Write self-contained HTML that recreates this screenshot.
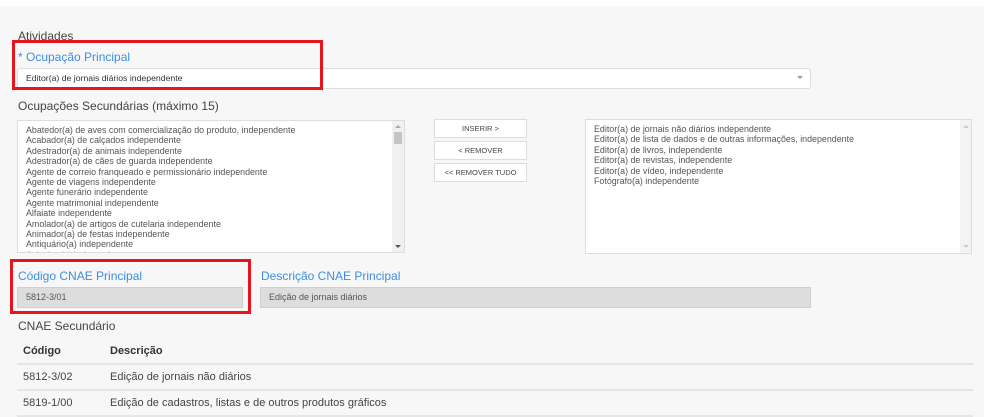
<!DOCTYPE html>
<html><head><meta charset="utf-8"><style>
*{box-sizing:border-box;margin:0;padding:0}
body{width:984px;height:417px;overflow:hidden;background:#f7f7f7;font-family:"Liberation Sans",Arial,sans-serif;color:#333;position:relative}
.a{position:absolute}
.lbl{font-size:12px;color:#444;white-space:nowrap}
.blue{color:#3a8ee6;font-size:12px;white-space:nowrap}
.box{background:#fff;border:1px solid #ddd}
.list{font-size:8.9px;line-height:10.4px;color:#555;padding:4px 0 0 8px;overflow:hidden;white-space:nowrap}
.btn{background:#fff;border:1px solid #ddd;font-size:7.5px;color:#444;text-align:center;line-height:17px;width:93px;height:19px;left:434px}
.red{border:3px solid #e8141b}
.gray{background:#ddd;border:1px solid #d0d0d0;font-size:9px;color:#555;padding-left:8px;line-height:19px}
.td{font-size:11px;color:#444;white-space:nowrap}
.hr{left:17px;width:956px;height:2px;background:#e6e6e6}
</style></head><body>
<div class="a" style="left:0;top:0;width:984px;height:6px;background:#fff"></div>
<div class="a lbl" style="left:18px;top:29px">Atividades</div>
<div class="a box" style="left:17px;top:68px;width:794px;height:21px;border-radius:3px;font-size:8.7px;color:#333;padding-left:8px;line-height:19px">Editor(a) de jornais diários independente</div>
<div class="a" style="left:797px;top:76px;width:0;height:0;border-left:3px solid transparent;border-right:3px solid transparent;border-top:3px solid #999"></div>
<div class="a blue" style="left:18px;top:50px">* Ocupação Principal</div>
<div class="a red" style="left:12px;top:40px;width:311px;height:50px"></div>
<div class="a lbl" style="left:18px;top:99px">Ocupações Secundárias (máximo 15)</div>
<div class="a box list" style="left:17px;top:120px;width:388px;height:133px">Abatedor(a) de aves com comercialização do produto, independente<br>Acabador(a) de calçados independente<br>Adestrador(a) de animais independente<br>Adestrador(a) de cães de guarda independente<br>Agente de correio franqueado e permissionário independente<br>Agente de viagens independente<br>Agente funerário independente<br>Agente matrimonial independente<br>Alfaiate independente<br>Amolador(a) de artigos de cutelaria independente<br>Animador(a) de festas independente<br>Antiquário(a) independente<br>Apicultor(a) independente</div>
<div class="a" style="left:392px;top:121px;width:12px;height:131px;background:#f0f0f0"></div>
<div class="a" style="left:394px;top:132px;width:8px;height:12px;background:#c4c4c4"></div>
<div class="a" style="left:395px;top:125px;border-left:3px solid transparent;border-right:3px solid transparent;border-bottom:3px solid #aaa"></div>
<div class="a" style="left:395px;top:245px;border-left:3px solid transparent;border-right:3px solid transparent;border-top:3px solid #555"></div>
<div class="a btn" style="top:119px">INSERIR &gt;</div>
<div class="a btn" style="top:141px">&lt; REMOVER</div>
<div class="a btn" style="top:163px">&lt;&lt; REMOVER TUDO</div>
<div class="a box list" style="left:585px;top:119px;width:387px;height:135px">Editor(a) de jornais não diários independente<br>Editor(a) de lista de dados e de outras informações, independente<br>Editor(a) de livros, independente<br>Editor(a) de revistas, independente<br>Editor(a) de vídeo, independente<br>Fotógrafo(a) independente</div>
<div class="a" style="left:960px;top:120px;width:11px;height:133px;background:#f3f3f3"></div>
<div class="a" style="left:963px;top:125px;border-left:3px solid transparent;border-right:3px solid transparent;border-bottom:3px solid #ccc"></div>
<div class="a" style="left:963px;top:245px;border-left:3px solid transparent;border-right:3px solid transparent;border-top:3px solid #ccc"></div>
<div class="a blue" style="left:18px;top:269px">Código CNAE Principal</div>
<div class="a gray" style="left:17px;top:287px;width:226px;height:21px">5812-3/01</div>
<div class="a red" style="left:10px;top:259px;width:241px;height:55px"></div>
<div class="a blue" style="left:261px;top:269px">Descrição CNAE Principal</div>
<div class="a gray" style="left:260px;top:287px;width:551px;height:21px">Edição de jornais diários</div>
<div class="a lbl" style="left:18px;top:319px">CNAE Secundário</div>
<div class="a td" style="left:23px;top:345px;font-weight:bold;color:#333">Código</div>
<div class="a td" style="left:110px;top:345px;font-weight:bold;color:#333">Descrição</div>
<div class="a hr" style="top:363px"></div>
<div class="a td" style="left:23px;top:371px">5812-3/02</div>
<div class="a td" style="left:110px;top:371px">Edição de jornais não diários</div>
<div class="a hr" style="top:389px"></div>
<div class="a td" style="left:23px;top:397px">5819-1/00</div>
<div class="a td" style="left:110px;top:397px">Edição de cadastros, listas e de outros produtos gráficos</div>
<div class="a hr" style="top:415px"></div>
</body></html>
